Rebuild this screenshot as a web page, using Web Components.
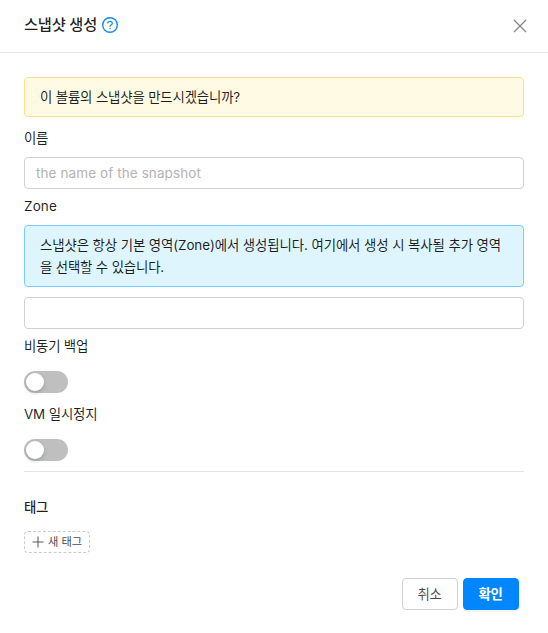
<!DOCTYPE html>
<html lang="ko"><head><meta charset="utf-8"><title>스냅샷 생성</title>
<style>
html,body{margin:0;background:#fff}
body{font:13.4px/22px Inter,"Noto Sans CJK KR",sans-serif;color:rgba(0,0,0,.88)}
</style></head><body>
<snap-dialog></snap-dialog>
<script>
function define(name, html){
  const t=document.createElement('template');t.innerHTML=html;
  customElements.define(name,class extends HTMLElement{
    constructor(){super();this.attachShadow({mode:'open'}).append(t.content.cloneNode(true));}
  });
}
// A run of text with a fixed advance width, spread evenly over its characters.
customElements.define('fit-text',class extends HTMLElement{
  connectedCallback(){
    if(this.shadowRoot)return;
    const r=this.attachShadow({mode:'open'});
    r.innerHTML='<style>:host{display:inline-block;white-space:nowrap}</style><span><slot></slot></span>';
    const w=+this.getAttribute('width'),s=r.querySelector('span');
    const d=w-s.getBoundingClientRect().width;
    this.style.letterSpacing=d/[...this.textContent].length+'px';
  }
});
define('alert-box',`<style>:host{display:block;box-sizing:border-box;border:1px solid #ffe08a;background:#fffae3;border-radius:4px;padding:8px 15px}
:host([kind=info]){background:#dff5fe;border-color:#7accf8}</style><slot></slot>`);
define('text-field',`<style>:host{display:block;box-sizing:border-box;height:32px;border:1px solid #d0d0d0;border-radius:4px;padding:4px 11px;color:#b3b3b3}</style><slot></slot>`);
define('toggle-switch',`<style>:host{display:block;box-sizing:border-box;width:44px;height:22px;border-radius:11px;background:#bfbfbf;padding:2px}
i{display:block;width:18px;height:18px;border-radius:50%;background:#fff;box-shadow:0 2px 4px rgba(0,35,11,.2)}</style><i></i>`);
define('push-button',`<style>:host{display:flex;box-sizing:border-box;width:56px;height:32px;align-items:center;justify-content:center;border:1px solid #d0d0d0;border-radius:4px;background:#fff;color:rgba(0,0,0,.72);padding:0 1px 0 0}
:host([primary]){background:#0087ff;border-color:#0087ff;color:#fff;font-weight:700;box-shadow:0 2px 0 rgba(0,0,0,.04)}</style><slot></slot>`);
define('snap-dialog',`<style>
:host{display:block;box-sizing:border-box;height:633px;overflow:hidden}
header{box-sizing:border-box;height:53px;padding:0 20px 0 24px;border-bottom:1px solid #e9e9e9;display:flex;align-items:center}
h1{margin:0 0 2px;font-size:15.3px;line-height:22px;font-weight:500}
.help{margin:0 0 2px 5px}.close{margin-left:auto}
svg{display:block;fill:none}
main{padding:24px 24px 0}
label{display:block;height:22px}
.latin{font-size:13.5px}
hr{border:0;border-top:1px solid #e3e3e3;margin:10px 0 0}
.tag{display:flex;align-items:center;box-sizing:border-box;width:66px;height:22px;border:1px dashed #cbcbcb;border-radius:4px;padding:0 7px;font-size:11.3px;gap:4px;color:rgba(0,0,0,.75)}
footer{display:flex;justify-content:flex-end;gap:5px;margin:25px 5px 0 0}
</style>
<header><h1><fit-text width="73">스냅샷 생성</fit-text></h1>
<svg class="help" width="16" height="16" viewBox="0 0 16 16" stroke="#1489f5"><circle cx="8" cy="8" r="7.3" stroke-width="1.4"/><path d="M5.7 6.4C5.7 3.7 10.3 3.7 10.3 6.4C10.3 7.9 8 7.8 8 9.7" stroke-width="1.2"/><circle cx="8" cy="11.6" r=".75" fill="#1489f5" stroke="none"/></svg>
<svg class="close" width="16" height="16" viewBox="0 0 16 16" stroke="#858585" stroke-width="1.3"><path d="M2 2l12 12M14 2L2 14"/></svg></header>
<main>
<alert-box><fit-text width="200">이 볼륨의 스냅샷을 만드시겠습니까?</fit-text></alert-box>
<label style="margin:10px 0 8px"><fit-text width="24">이름</fit-text></label>
<text-field class="latin"><fit-text width="165">the name of the snapshot</fit-text></text-field>
<label class="latin" style="margin:6px 0 8px"><fit-text width="33">Zone</fit-text></label>
<alert-box kind="info"><fit-text width="461">스냅샷은 항상 기본 영역(Zone)에서 생성됩니다. 여기에서 생성 시 복사될 추가 영역</fit-text><br><fit-text width="124">을 선택할 수 있습니다.</fit-text></alert-box>
<text-field style="margin-top:10px"></text-field>
<label style="margin:6px 0 14px"><fit-text width="64">비동기 백업</fit-text></label>
<toggle-switch></toggle-switch>
<label style="margin:10px 0 14px"><fit-text width="73.5">VM 일시정지</fit-text></label>
<toggle-switch></toggle-switch>
<hr>
<label style="margin:24px 0 13px;font-weight:500"><fit-text width="24">태그</fit-text></label>
<div class="tag"><svg width="12" height="12" viewBox="0 0 12 12" stroke="#555"><path d="M6 .5v11M.5 6h11"/></svg><fit-text width="34">새 태그</fit-text></div>
<footer><push-button><fit-text width="24">취소</fit-text></push-button><push-button primary><fit-text width="24">확인</fit-text></push-button></footer>
</main>`);
</script></body></html>
